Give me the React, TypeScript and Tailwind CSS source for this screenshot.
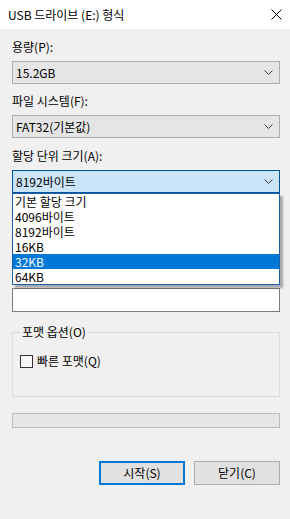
import React from 'react';

const font = { fontFamily: '"Noto Sans CJK KR", "Noto Sans", sans-serif' };

const units = ['기본 할당 크기', '4096바이트', '8192바이트', '16KB', '32KB', '64KB'];

function Chevron() {
	return (
		<svg width="9" height="5" viewBox="0 0 9 5" className="shrink-0">
			<path d="M0.5 0.5 L4.5 4.5 L8.5 0.5" fill="none" stroke="#404040" strokeWidth="1" />
		</svg>
	);
}

function Combo({ value, open }: { value: string; open?: boolean }) {
	return (
		<div
			className={
				open
					? 'flex h-[23px] items-center justify-between border border-[#005499] bg-[#cce4f7] pl-[3px] pr-[6px]'
					: 'flex h-[23px] items-center justify-between border border-[#adadad] bg-[#e5e5e5] pl-[3px] pr-[6px]'
			}
		>
			<span className="text-[12px] leading-[16px] text-black">{value}</span>
			<Chevron />
		</div>
	);
}

export default function App() {
	return (
		<div className="h-[519px] w-[290px] overflow-hidden bg-[#f0f0f0] text-black" style={font}>
			<div className="flex h-[29px] items-center justify-between bg-white pl-[8px] pr-[8px]">
				<span className="text-[12px] leading-[16px]">USB 드라이브 (E:) 형식</span>
				<svg width="11" height="11" viewBox="0 0 11 11">
					<path d="M0.5 0.5 L10.5 10.5 M10.5 0.5 L0.5 10.5" stroke="#000" strokeWidth="1" />
				</svg>
			</div>

			<div className="flex flex-col pl-[12px] pr-[10px]">
				<div className="mt-[10px] text-[12px] leading-[16px]">용량(P):</div>
				<div className="mt-[6px]">
					<Combo value="15.2GB" />
				</div>

				<div className="mt-[9px] text-[12px] leading-[16px]">파일 시스템(F):</div>
				<div className="mt-[6px]">
					<Combo value="FAT32(기본값)" />
				</div>

				<div className="mt-[10px] text-[12px] leading-[16px]">할당 단위 크기(A):</div>
				<div className="relative z-10 mt-[6px]">
					<Combo value="8192바이트" open />
					<ul className="absolute left-0 right-0 top-full border border-[#1c5fa8] bg-white shadow-[3px_3px_2px_rgba(0,0,0,0.3)]">
						{units.map((u) => (
							<li
								key={u}
								className={
									u === '32KB'
										? 'h-[15px] bg-[#0078d7] pl-[2px] text-[12px] leading-[15px] text-white'
										: 'h-[15px] pl-[2px] text-[12px] leading-[15px] text-black'
								}
							>
								{u}
							</li>
						))}
					</ul>
				</div>

				{/* volume label box, mostly hidden under the open list */}
				<div className="mt-[95px] h-[24px] border border-[#7a7a7a] bg-white" />

				<fieldset className="mt-[12px] h-[73px] border border-[#dcdcdc] px-[7px]">
					<legend className="px-[2px] text-[12px] leading-[16px]">포맷 옵션(O)</legend>
					<label className="mt-[13px] flex items-center gap-[4px]">
						<span className="h-[13px] w-[13px] border border-[#333333] bg-[#f7f7f7]" />
						<span className="text-[12px] leading-[16px]">빠른 포맷(Q)</span>
					</label>
				</fieldset>

				<div className="mt-[16px] h-[15px] border border-[#bcbcbc] bg-[#e6e6e6]" />

				<div className="mt-[33px] flex justify-end gap-[9px]">
					<button className="flex h-[24px] w-[86px] items-center justify-center border-2 border-[#0078d7] bg-[#e1e1e1] text-[12px] text-black">
						시작(S)
					</button>
					<button className="flex h-[24px] w-[86px] items-center justify-center border border-[#adadad] bg-[#e1e1e1] text-[12px] text-black">
						닫기(C)
					</button>
				</div>
			</div>
		</div>
	);
}
